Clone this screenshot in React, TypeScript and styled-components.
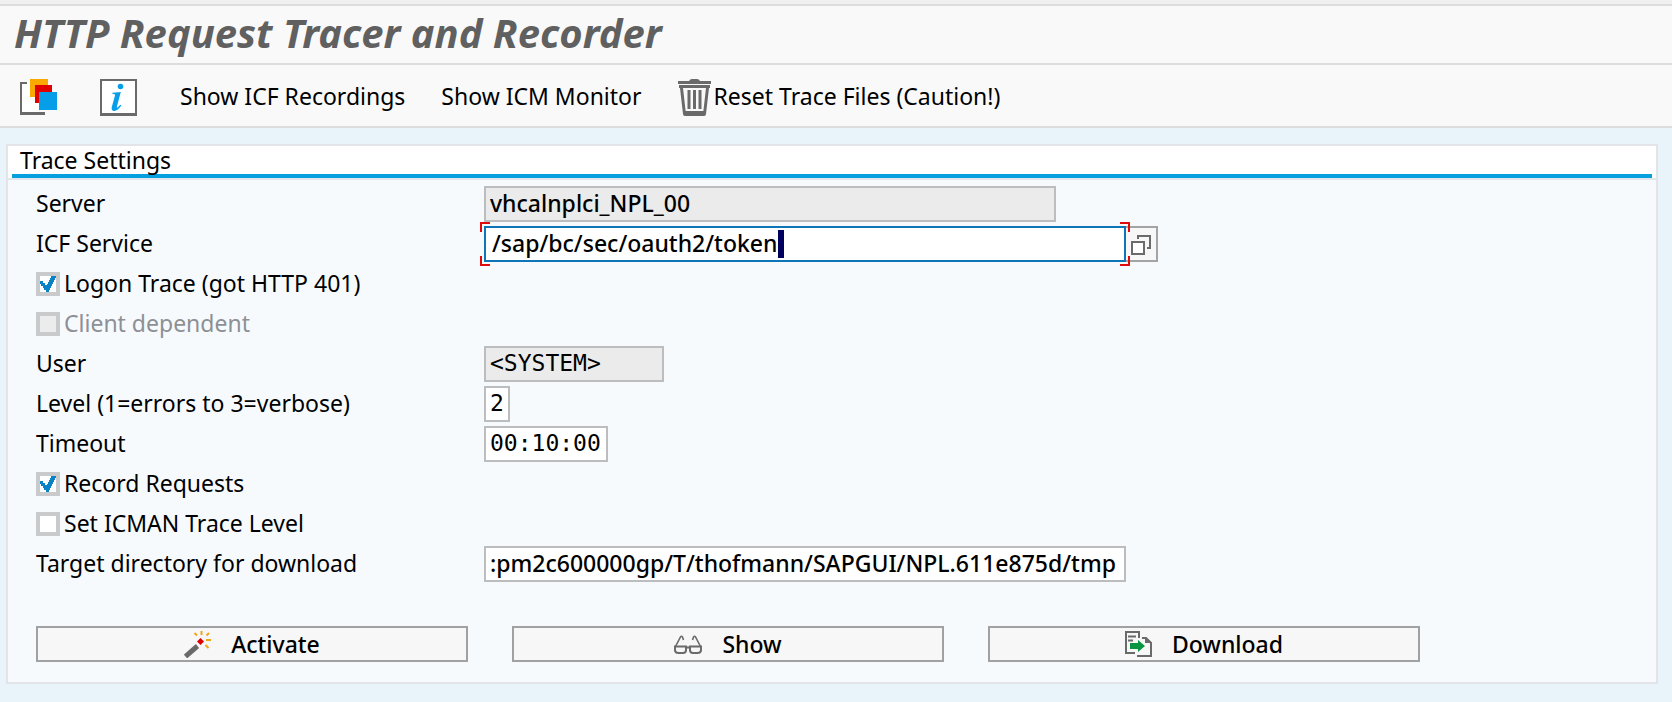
import React, { ReactNode, useId, useState } from "react";
import styled, { createGlobalStyle, css } from "styled-components";

const sans = `"Noto Sans", "Lucida Grande", sans-serif`;
const mono = `"DejaVu Sans Mono", monospace`;

const GlobalStyle = createGlobalStyle`
  *, *::before, *::after { box-sizing: border-box; }
  body { margin: 0; background: #e8f4f9; }
`;

const Page = styled.div`
  display: flex;
  flex-direction: column;
  min-height: 100vh;
  font: 400 23px/28px ${sans};
  color: #000;
`;

const WindowEdge = styled.div`
  height: 6px;
  background: #f0f0f0;
  border-bottom: 2px solid #dddddd;
`;

const TitleBar = styled.header`
  padding: 0 14px 3px;
  background: #f9f9f9;
  border-bottom: 2px solid #dddddd;
`;

const Title = styled.h1`
  margin: 0;
  font: italic 700 40px/54px ${sans};
  color: #606060;
  white-space: nowrap;
`;

const Toolbar = styled.nav`
  display: flex;
  align-items: center;
  gap: 36px;
  height: 63px;
  padding: 0 20px;
  background: #f9f9f9;
  border-bottom: 2px solid #dddddd;
`;

const ToolButton = styled.button<{ $square?: boolean }>`
  display: flex;
  align-items: center;
  gap: 3px;
  flex: none;
  width: ${(p) => (p.$square ? "44px" : "auto")};
  padding: 0;
  border: 0;
  background: none;
  font: inherit;
  color: inherit;
  white-space: nowrap;

  svg { margin-top: 4px; }
`;

const Main = styled.main`
  padding: 16px 14px 18px 6px;
`;

const Panel = styled.section`
  border: 2px solid #e2e4e8;
  background: #f7fafd;
`;

const PanelHeader = styled.div`
  padding: 0 4px;
  background: #fff;
  border-bottom: 2px solid #e2e6ec;
`;

const PanelTitle = styled.h2`
  margin: 0;
  padding: 0 8px;
  font: inherit;
  border-bottom: 4px solid #069fe0;
`;

const Form = styled.form`
  padding: 4px 28px 20px;
`;

const Row = styled.div`
  display: flex;
  align-items: center;
  height: 40px;
`;

const FieldLabel = styled.label`
  flex: none;
  width: 448px;
  padding-bottom: 2px;
`;

const Field = styled.input<{ $width: number; $mono?: boolean }>`
  width: ${(p) => p.$width}px;
  height: 36px;
  min-width: 0;
  padding: 0 4px 2px;
  border: 2px solid #bcbdbf;
  border-radius: 0;
  background: #fff;
  font: inherit;
  font-family: ${(p) => (p.$mono ? mono : sans)};
  font-weight: ${(p) => (p.$mono ? 400 : 500)};
  color: #000;
  outline: none;
  &:read-only { background: #ebebeb; }
`;

const FocusFrame = styled.div`
  position: relative;
  display: flex;
  flex: 0 1 642px;
  min-width: 0;
  ${Field} {
    flex: 1;
    border-color: #0f75b9;
    padding-left: 6px;
    caret-color: transparent;
  }
`;

const Corner = styled.span<{ $v: "top" | "bottom"; $h: "left" | "right" }>`
  position: absolute;
  width: 10px;
  height: 10px;
  ${(p) => css`
    ${p.$v}: -4px;
    ${p.$h}: -4px;
    border-${p.$v}: 2px solid #e00a0a;
    border-${p.$h}: 2px solid #e00a0a;
  `}
  z-index: 1;
`;

const CaretLayer = styled.span`
  position: absolute;
  inset: 4px auto 4px 8px;
  display: flex;
  pointer-events: none;
  font-weight: 500;
  color: transparent;
  white-space: pre;
  &::after {
    content: "";
    width: 6px;
    margin-left: 1px;
    background: #00005f;
  }
`;

const HelpButton = styled.button`
  flex: none;
  display: flex;
  align-items: center;
  justify-content: center;
  width: 32px;
  height: 36px;
  padding: 2px 0 0;
  border: 2px solid #a3a4a6;
  border-left: 0;
  background: #f7f7f7;
`;

const CheckLabel = styled.label<{ $disabled?: boolean }>`
  display: flex;
  align-items: center;
  gap: 4px;
  color: ${(p) => (p.$disabled ? "#8d9095" : "inherit")};
`;

const CheckText = styled.span`
  padding-bottom: 2px;
`;

const CheckBoxFrame = styled.span`
  display: grid;
  width: 24px;
  height: 24px;
  > * { grid-area: 1 / 1; place-self: center; }
  > svg { pointer-events: none; }
`;

const CheckInput = styled.input`
  appearance: none;
  width: 24px;
  height: 24px;
  margin: 0;
  border: 4px solid #c9cacb;
  background: #fff;
  &:disabled { background: #ebeded; }
`;

const Actions = styled.div`
  display: flex;
  gap: 44px;
  margin-top: 42px;
`;

const ActionButton = styled.button`
  display: flex;
  flex: 0 1 432px;
  align-items: center;
  justify-content: center;
  gap: 20px;
  height: 36px;
  padding: 0;
  border: 2px solid #a0a1a2;
  background: #f7f7f7;
  font: inherit;
  font-weight: 500;
  color: #000;
`;

const SessionIcon = () => (
  <svg width="37" height="37" viewBox="0 0 37 37" aria-hidden="true">
    <path d="M2 4H19V34H2z" fill="#fff" />
    <path d="M0 3H7V5H2V33H25V36H0z" fill="#6a6a6a" />
    <path d="M10 0H28V18H10z" fill="#fba900" />
    <path d="M15 6H32V24H15z" fill="#e00000" />
    <path d="M19 13H37V31H19z" fill="#069ee8" />
  </svg>
);

const InfoIcon = () => (
  <svg width="37" height="37" viewBox="0 0 37 37" aria-hidden="true">
    <path d="M1 1H36V36H1z" fill="#fff" stroke="#6a6a6a" strokeWidth="2" />
    <path d="M0 35.5H37" stroke="#6a6a6a" strokeWidth="3" />
    <circle cx="20.5" cy="7.5" r="2.8" fill="#069ee8" />
    <path
      d="M12.5 13.8L20.8 13 16.9 27.4C16.6 28.8 17.3 28.9 18.2 28.1L20.3 25.8 21.3 26.6C18.9 30.2 16.8 31.9 14.3 31.9 12 31.9 11.2 30.4 11.8 28L15 16.5C15.3 15.2 14.6 14.9 12.3 14.8z"
      fill="#069ee8"
    />
  </svg>
);

const TrashIcon = () => (
  <svg width="33" height="37" viewBox="0 0 33 37" fill="#6a6a6a" aria-hidden="true">
    <path d="M0 2H11Q12 0 14 0H19Q21 0 22 2H33V5H0z" />
    <path d="M1 6H32V9H1z" />
    <path d="M2 9H31L28 35Q28 37 26 37H7Q5 37 5 35zM5 9L7.600 32H25.400L28 9z" fillRule="evenodd" />
    <path d="M9.500 11H12.500V30H9.500zM15 11H18V30H15zM20.500 11H23.500V30H20.500z" />
  </svg>
);

const ValueHelpIcon = () => (
  <svg width="20" height="20" viewBox="0 0 20 20" fill="none" stroke="#6b6b6b" strokeWidth="2" aria-hidden="true">
    <path d="M1 7H13V19H1z" fill="#fff" />
    <path d="M7 4V1H19V13H16" />
  </svg>
);

const CheckMark = () => (
  <svg width="16" height="16" viewBox="0 0 16 16" fill="#0a82c8" aria-hidden="true">
    <path d="M0 5H3V7H5V9H7V8H8V6H9V4H10V2H11V0H16V2H15V4H14V6H13V8H12V10H11V12H10V14H9V16H6V14H4V12H3V10H1V8H0z" />
  </svg>
);

const WandIcon = () => (
  <svg width="27" height="27" viewBox="0 0 27 27" aria-hidden="true">
    <path d="M1.500 25.500L13.500 15" stroke="#6a6a6a" strokeWidth="5" />
    <path d="M16.500 7L20 10.500 16.500 14 13 10.500z" fill="#e00000" />
    <path d="M17.500 0V4M10.500 2L13 4.500M25 2L22.500 4.500M22 9H27M21.500 14L24.500 17" stroke="#f2a71a" strokeWidth="2" />
  </svg>
);

const GlassesIcon = () => (
  <svg width="28" height="19" viewBox="0 0 28 19" fill="none" stroke="#6b6b6b" strokeWidth="2" aria-hidden="true">
    <path d="M1 11.500H12V15Q12 18 9 18H4.500Q1 18 1 15zM16 11.500H27V15Q27 18 23.500 18H19Q16 18 16 15zM12 12.500H16" />
    <path d="M1.500 11.500L6.500 2Q7.500 .5 8.500 2L9.500 5M26.500 11.500L21.500 2Q20.500 .5 19.500 2L18.500 5" strokeWidth="1.600" />
  </svg>
);

const DownloadIcon = () => (
  <svg width="27" height="26" viewBox="0 0 27 26" aria-hidden="true">
    <path d="M14 7V1H1V22H10" fill="none" stroke="#6a6a6a" strokeWidth="2" />
    <path d="M3 5.500H11M3 9.500H8" stroke="#6a6a6a" strokeWidth="2" />
    <path d="M17 7H21L26 12V25H12" fill="none" stroke="#6a6a6a" strokeWidth="2" />
    <path d="M20 6L27 12H20z" fill="#6a6a6a" />
    <path d="M5 12H13V9L20 15 13 21V18H5z" fill="#0a9640" />
  </svg>
);

interface TextRowProps {
  label: string;
  value: string;
  width: number;
  mono?: boolean;
  readOnly?: boolean;
}

const TextRow = ({ label, value, width, mono: isMono, readOnly }: TextRowProps) => {
  const id = useId();
  return (
    <Row>
      <FieldLabel htmlFor={id}>{label}</FieldLabel>
      <Field id={id} defaultValue={value} $width={width} $mono={isMono} readOnly={readOnly} spellCheck={false} />
    </Row>
  );
};

const ServiceRow = () => {
  const id = useId();
  const [path, setPath] = useState("/sap/bc/sec/oauth2/token");
  return (
    <Row>
      <FieldLabel htmlFor={id}>ICF Service</FieldLabel>
      <FocusFrame>
        <Field id={id} value={path} onChange={(e) => setPath(e.target.value)} $width={642} spellCheck={false} />
        <CaretLayer aria-hidden="true">{path}</CaretLayer>
        <Corner $v="top" $h="left" />
        <Corner $v="top" $h="right" />
        <Corner $v="bottom" $h="left" />
        <Corner $v="bottom" $h="right" />
      </FocusFrame>
      <HelpButton type="button" aria-label="Value help"><ValueHelpIcon /></HelpButton>
    </Row>
  );
};

const CheckRow = ({ label, checked = false, disabled }: { label: string; checked?: boolean; disabled?: boolean }) => {
  const [on, setOn] = useState(checked);
  return (
    <Row>
      <CheckLabel $disabled={disabled}>
        <CheckBoxFrame>
          <CheckInput type="checkbox" checked={on} disabled={disabled} onChange={(e) => setOn(e.target.checked)} />
          {on && <CheckMark />}
        </CheckBoxFrame>
        <CheckText>{label}</CheckText>
      </CheckLabel>
    </Row>
  );
};

const Action = ({ icon, children }: { icon: ReactNode; children: ReactNode }) => (
  <ActionButton type="button">{icon}{children}</ActionButton>
);

export default function App() {
  return (
    <Page>
      <GlobalStyle />
      <WindowEdge />
      <TitleBar><Title>HTTP Request Tracer and Recorder</Title></TitleBar>
      <Toolbar>
        <ToolButton $square aria-label="Sessions"><SessionIcon /></ToolButton>
        <ToolButton $square aria-label="Information"><InfoIcon /></ToolButton>
        <ToolButton>Show ICF Recordings</ToolButton>
        <ToolButton>Show ICM Monitor</ToolButton>
        <ToolButton><TrashIcon />Reset Trace Files (Caution!)</ToolButton>
      </Toolbar>
      <Main>
        <Panel>
          <PanelHeader><PanelTitle>Trace Settings</PanelTitle></PanelHeader>
          <Form>
            <TextRow label="Server" value="vhcalnplci_NPL_00" width={572} readOnly />
            <ServiceRow />
            <CheckRow label="Logon Trace (got HTTP 401)" checked />
            <CheckRow label="Client dependent" disabled />
            <TextRow label="User" value="<SYSTEM>" width={180} mono readOnly />
            <TextRow label="Level (1=errors to 3=verbose)" value="2" width={26} mono />
            <TextRow label="Timeout" value="00:10:00" width={124} mono />
            <CheckRow label="Record Requests" checked />
            <CheckRow label="Set ICMAN Trace Level" />
            <TextRow label="Target directory for download" value=":pm2c600000gp/T/thofmann/SAPGUI/NPL.611e875d/tmp" width={642} />
            <Actions>
              <Action icon={<WandIcon />}>Activate</Action>
              <Action icon={<GlassesIcon />}>Show</Action>
              <Action icon={<DownloadIcon />}>Download</Action>
            </Actions>
          </Form>
        </Panel>
      </Main>
    </Page>
  );
}
